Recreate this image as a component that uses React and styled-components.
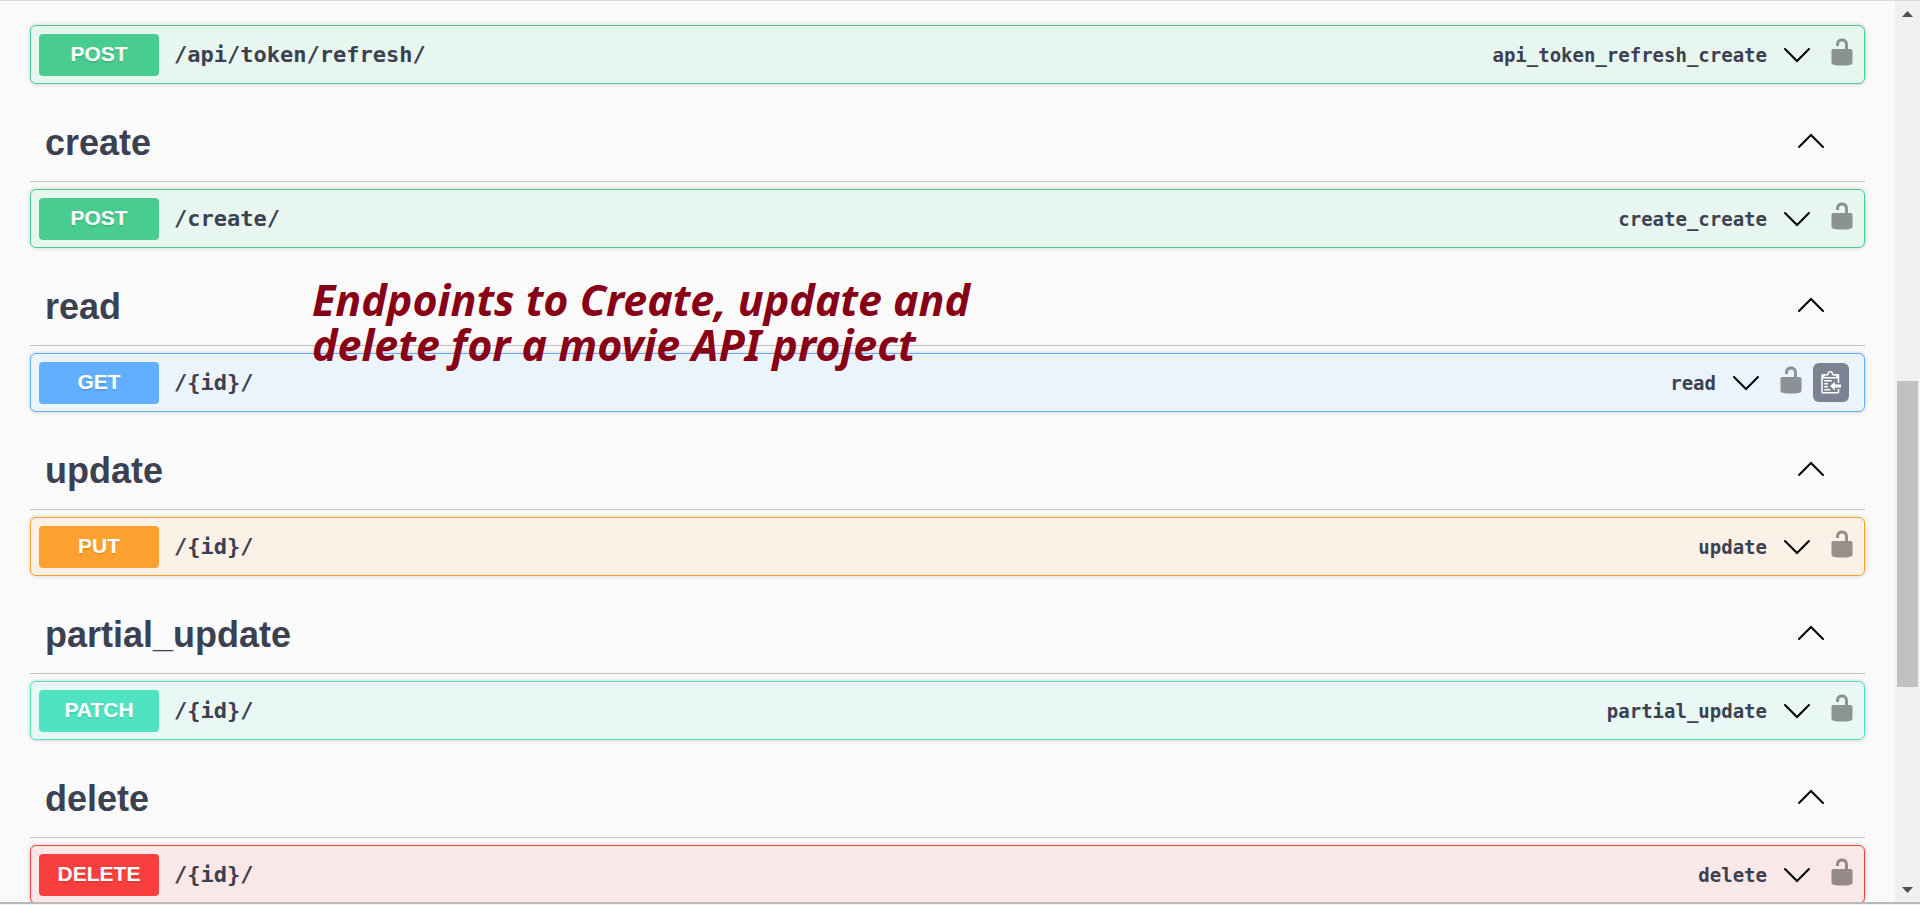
import React from 'react';
import styled, { createGlobalStyle } from 'styled-components';

const Global = createGlobalStyle`
  *, *::before, *::after { box-sizing: border-box; }
  body { margin: 0; background: #fafafa; color: #3b4151; font-family: "Liberation Sans", Arial, sans-serif; }
`;

const tones = {
  post: { main: '#49cc90', soft: '#e8f6f0' },
  get: { main: '#61affe', soft: '#ebf3fb' },
  put: { main: '#fca130', soft: '#fbf1e6' },
  patch: { main: '#50e3c2', soft: '#e9f8f5' },
  delete: { main: '#f93e3e', soft: '#fae7e7' },
};

const Page = styled.div`
  display: flex;
  flex-direction: column;
  height: 100vh;
  border-top: 1px solid #d9d9d9;
  border-bottom: 1px solid #f2f2f2;
`;

const Viewport = styled.div`
  display: flex;
  flex: 1;
  min-height: 0;
  border-bottom: 2px solid #b9b9b9;
`;

const Content = styled.main`
  position: relative;
  flex: 1;
  min-width: 0;
  overflow: hidden;
  padding: 24px 30px 0;
`;

const Section = styled.section`
  display: flex;
  flex-direction: column;
`;

const SectionHeader = styled.div`
  display: flex;
  align-items: center;
  justify-content: space-between;
  height: 78px;
  margin: 20px 0 7px;
  padding: 0 40px 0 15px;
  border-bottom: 1px solid #c0c1c6;
`;

const SectionTitle = styled.h2`
  margin: 0;
  font-size: 36px;
  line-height: 44px;
  font-weight: 700;
`;

const IconButton = styled.button`
  display: flex;
  align-items: center;
  justify-content: center;
  padding: 0;
  border: 0;
  background: none;
  color: #000;
  cursor: pointer;
`;

const CollapseButton = styled(IconButton)`
  padding-bottom: 3px;
`;

const CopyButton = styled(IconButton)`
  width: 36px;
  height: 39px;
  margin: 0 9px 0 6px;
  border-radius: 6px;
  background: #7d8293;
`;

const Block = styled.article`
  display: flex;
  align-items: center;
  height: 59px;
  padding: 0 6px 0 8px;
  border: 1px solid ${(p) => p.$tone.main};
  border-radius: 6px;
  background: ${(p) => p.$tone.soft};
  box-shadow: 0 0 4px rgba(0, 0, 0, 0.19);
`;

const Method = styled.span`
  width: 120px;
  height: 42px;
  border-radius: 4px;
  background: ${(p) => p.$tone.main};
  color: #fff;
  font-size: 21px;
  font-weight: 700;
  line-height: 40px;
  text-align: center;
  text-shadow: 0 2px 0 rgba(0, 0, 0, 0.1);
`;

const Path = styled.span`
  flex: 1;
  padding-left: 15px;
  font-family: "DejaVu Sans Mono", monospace;
  font-size: 22px;
  font-weight: 700;
`;

const OperationId = styled.span`
  padding-right: 16px;
  font-family: "DejaVu Sans Mono", monospace;
  font-size: 19px;
  font-weight: 700;
`;

const LockButton = styled(IconButton)`
  width: 33px;
  height: 30px;
  margin: 0 0 6px 14px;
`;

const Note = styled.p`
  position: absolute;
  top: 276px;
  left: 312px;
  margin: 0;
  color: #880015;
  font-family: "Noto Sans", sans-serif;
  font-size: 43px;
  font-style: italic;
  font-weight: 700;
  line-height: 45px;
`;

const Scrollbar = styled.div`
  display: flex;
  flex-direction: column;
  align-items: center;
  width: 25px;
  padding: 10px 0 9px;
  background: #f0f0f0;
`;

const Track = styled.div`
  display: flex;
  flex: 1;
  flex-direction: column;
  align-items: center;
`;

const Space = styled.div`
  flex: ${(p) => p.$share};
`;

const Thumb = styled.div`
  flex: 306;
  width: 21px;
  background: #c1c1c1;
`;

const Chevron = ({ up }) => (
  <svg width="28" height="16" viewBox="0 0 28 16" fill="none" stroke="currentColor" strokeWidth="2" strokeLinecap="round" aria-hidden="true">
    <path d={up ? 'M2 14 14 2 26 14' : 'M2 2 14 14 26 2'} />
  </svg>
);

const Lock = () => (
  <svg width="30" height="30" viewBox="0 0 20 20" opacity="0.4" aria-hidden="true">
    <path d="M15.8 8H14V5.6C14 2.703 12.665 1 10 1 7.334 1 6 2.703 6 5.6V6h2v-.801C8 3.754 8.797 3 10 3c1.203 0 2 .754 2 2.199V8H4c-.553 0-1 .646-1 1.199V17c0 .549.428 1.139.951 1.307l1.197.387C5.672 18.861 6.55 19 7.1 19h5.8c.549 0 1.428-.139 1.951-.307l1.196-.387c.524-.167.953-.757.953-1.306V9.199C17 8.646 16.352 8 15.8 8z" />
  </svg>
);

const Clipboard = () => (
  <svg width="20" height="24" viewBox="2 0 13 16" fill="#fff" aria-hidden="true">
    <path d="M4 12h4v1H4v-1zm5-6H4v1h5V6zm2 3V7l-3 3 3 3v-2h5V9h-5zM6.5 8H4v1h2.5V8zM4 11h2.5v-1H4v1zm9 1h1v2c-.02.28-.11.52-.3.7-.19.18-.42.28-.7.3H3c-.55 0-1-.45-1-1V3c0-.55.45-1 1-1h3c0-1.11.89-2 2-2 1.11 0 2 .89 2 2h3c.55 0 1 .45 1 1v5h-1V5H3v9h10v-2zM4 4h8c0-.55-.45-1-1-1h-1c-.55 0-1-.45-1-1s-.45-1-1-1-1 .45-1 1-.45 1-1 1H5c-.55 0-1 .45-1 1z" />
  </svg>
);

const Triangle = ({ down }) => (
  <svg width="11" height="6" viewBox="0 0 11 6" fill="#505050" aria-hidden="true">
    <path d={down ? 'M0 0H11L5.5 6Z' : 'M0 6H11L5.5 0Z'} />
  </svg>
);

function Operation({ method, path, id, copy }) {
  const tone = tones[method];
  return (
    <Block $tone={tone}>
      <Method $tone={tone}>{method.toUpperCase()}</Method>
      <Path>{path}</Path>
      <OperationId>{id}</OperationId>
      <IconButton aria-label={`Expand ${id}`}><Chevron /></IconButton>
      <LockButton aria-label="Authorize"><Lock /></LockButton>
      {copy && <CopyButton aria-label="Copy path"><Clipboard /></CopyButton>}
    </Block>
  );
}

const sections = [
  { name: 'create', method: 'post', path: '/create/', id: 'create_create' },
  { name: 'read', method: 'get', path: '/{id}/', id: 'read', copy: true },
  { name: 'update', method: 'put', path: '/{id}/', id: 'update' },
  { name: 'partial_update', method: 'patch', path: '/{id}/', id: 'partial_update' },
  { name: 'delete', method: 'delete', path: '/{id}/', id: 'delete' },
];

export default function App() {
  return (
    <Page>
      <Global />
      <Viewport>
        <Content>
          <Operation method="post" path="/api/token/refresh/" id="api_token_refresh_create" />
          {sections.map(({ name, ...operation }) => (
            <Section key={name}>
              <SectionHeader>
                <SectionTitle>{name}</SectionTitle>
                <CollapseButton aria-label={`Collapse ${name}`}><Chevron up /></CollapseButton>
              </SectionHeader>
              <Operation {...operation} />
            </Section>
          ))}
          <Note>Endpoints to Create, update and<br />delete for a movie API project</Note>
        </Content>
        <Scrollbar aria-hidden="true">
          <Triangle />
          <Track>
            <Space $share={364} />
            <Thumb />
            <Space $share={200} />
          </Track>
          <Triangle down />
        </Scrollbar>
      </Viewport>
    </Page>
  );
}
